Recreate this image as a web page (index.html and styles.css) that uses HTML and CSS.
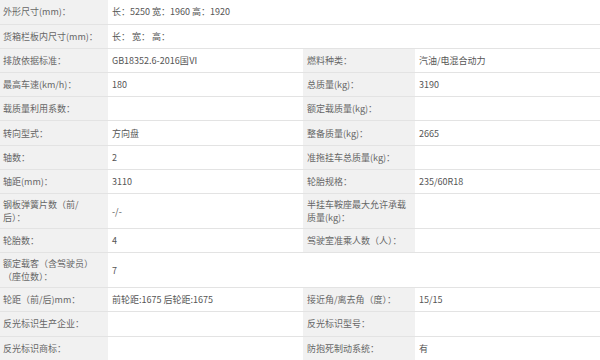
FILE: index.html
```html
<!DOCTYPE html>
<html lang="zh-CN">
<head>
<meta charset="utf-8">
<title>参数</title>
<link rel="stylesheet" href="styles.css">
</head>
<body>
<table class="spec">
  <colgroup>
    <col class="c-label1">
    <col class="c-value1">
    <col class="c-label2">
    <col class="c-value2">
  </colgroup>
  <tbody>
    <tr>
      <th>外形尺寸(mm)：</th>
      <td colspan="3">长：5250 宽：1960 高：1920</td>
    </tr>
    <tr>
      <th>货箱栏板内尺寸(mm)：</th>
      <td colspan="3">长： 宽： 高：</td>
    </tr>
    <tr>
      <th>排放依据标准：</th>
      <td>GB18352.6-2016国Ⅵ</td>
      <th>燃料种类：</th>
      <td>汽油/电混合动力</td>
    </tr>
    <tr>
      <th>最高车速(km/h)：</th>
      <td>180</td>
      <th>总质量(kg)：</th>
      <td>3190</td>
    </tr>
    <tr>
      <th>载质量利用系数：</th>
      <td></td>
      <th>额定载质量(kg)：</th>
      <td></td>
    </tr>
    <tr>
      <th>转向型式：</th>
      <td>方向盘</td>
      <th>整备质量(kg)：</th>
      <td>2665</td>
    </tr>
    <tr>
      <th>轴数：</th>
      <td>2</td>
      <th>准拖挂车总质量(kg)：</th>
      <td></td>
    </tr>
    <tr>
      <th>轴距(mm)：</th>
      <td>3110</td>
      <th>轮胎规格：</th>
      <td>235/60R18</td>
    </tr>
    <tr>
      <th>钢板弹簧片数（前/后）：</th>
      <td>-/-</td>
      <th>半挂车鞍座最大允许承载质量(kg)：</th>
      <td></td>
    </tr>
    <tr>
      <th>轮胎数：</th>
      <td>4</td>
      <th>驾驶室准乘人数（人）：</th>
      <td></td>
    </tr>
    <tr>
      <th>额定载客（含驾驶员）（座位数）：</th>
      <td colspan="3">7</td>
    </tr>
    <tr>
      <th>轮距（前/后)mm：</th>
      <td>前轮距:1675 后轮距:1675</td>
      <th>接近角/离去角（度）：</th>
      <td>15/15</td>
    </tr>
    <tr>
      <th>反光标识生产企业：</th>
      <td></td>
      <th>反光标识型号：</th>
      <td></td>
    </tr>
    <tr>
      <th>反光标识商标：</th>
      <td></td>
      <th>防抱死制动系统：</th>
      <td>有</td>
    </tr>
  </tbody>
</table>
</body>
</html>
```

FILE: styles.css
```css
html, body {
  margin: 0;
  padding: 0;
  background: #ffffff;
}

.spec {
  width: 600px;
  border-collapse: collapse;
  table-layout: fixed;
  font-family: "Noto Sans CJK SC", "Noto Sans", sans-serif;
  font-size: 9px;
  line-height: 13px;
}

.c-label1 { width: 108px; }
.c-value1 { width: 195px; }
.c-label2 { width: 112px; }
.c-value2 { width: 185px; }

.spec tr {
  height: 24.2px;
}

.spec th,
.spec td {
  padding: 4px 4px;
  border-bottom: 1px solid #e3e3e3;
  vertical-align: middle;
  text-align: left;
  font-weight: normal;
}

.spec th {
  background: #f1f1f1;
  color: #666666;
  padding-right: 8px;
}

.spec th:first-child {
  padding-left: 3px;
}

.spec td {
  background: #ffffff;
  color: #555555;
}
```
